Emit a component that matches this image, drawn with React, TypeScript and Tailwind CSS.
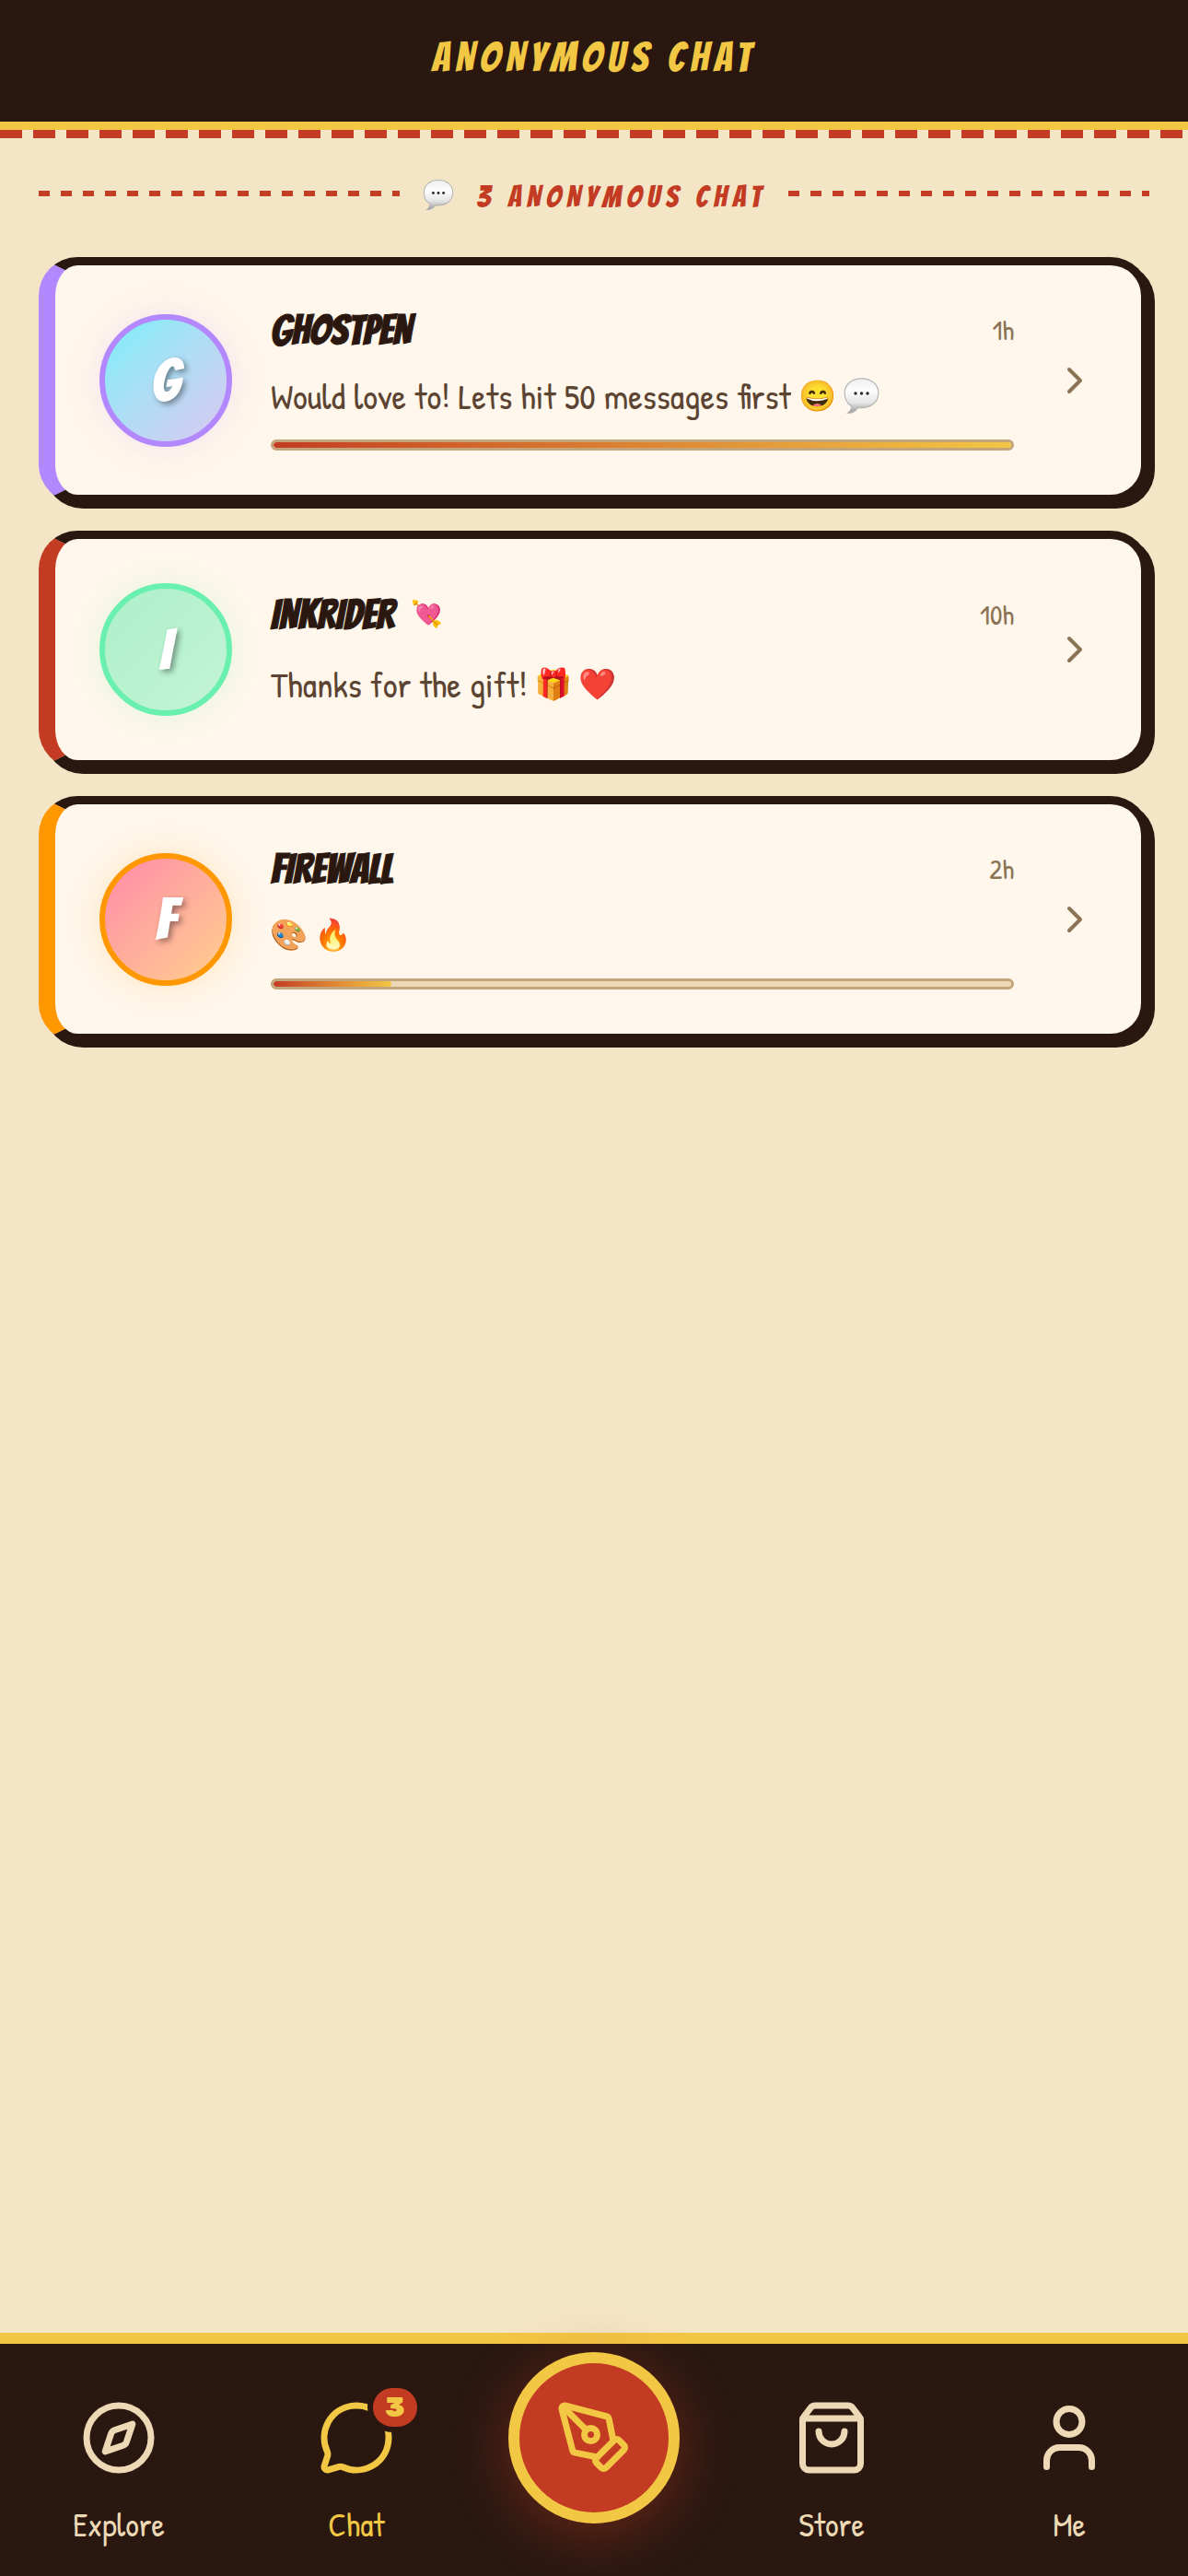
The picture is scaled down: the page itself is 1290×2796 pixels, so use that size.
import React from "react";
import { ChevronRight, Compass, MessageCircle, PenTool, ShoppingBag, User } from "lucide-react";

type Chat = {
  name: string;
  badge?: string;
  time: string;
  text?: string;
  emojis: string[];
  border: string;
  avatar: string;
  progress?: number;
};

const chats: Chat[] = [
  {
    name: "GHOSTPEN",
    time: "1h",
    text: "Would love to! Lets hit 50 messages first",
    emojis: ["😄", "💬"],
    border: "border-l-[#b388ff]",
    avatar: "border-[#b388ff] from-[#76eff8] to-[#d8c8f0] shadow-[0_0_36px_rgba(179,136,255,0.18)]",
    progress: 100,
  },
  {
    name: "INKRIDER",
    badge: "💘",
    time: "10h",
    text: "Thanks for the gift!",
    emojis: ["🎁", "❤️"],
    border: "border-l-[#c23b22]",
    avatar: "border-[#69f0ae] from-[#adf0c8] to-[#c3f4d6] shadow-[0_0_36px_rgba(105,240,174,0.18)]",
  },
  {
    name: "FIREWALL",
    time: "2h",
    emojis: ["🎨", "🔥"],
    border: "border-l-[#ff9800]",
    avatar: "border-[#ff9800] from-[#ff8aa8] to-[#ffcf8c] shadow-[0_0_36px_rgba(255,152,0,0.18)]",
    progress: 16,
  },
];

const display = "font-['Bangers','Roboto_Condensed',sans-serif]";

function SpeechBubble({ className }: { className: string }) {
  return (
    <svg viewBox="0 0 39 42" className={className} role="img" aria-label="💬">
      <defs>
        <linearGradient id="bubble-fill" x1="0" y1="0" x2="0" y2="1">
          <stop offset="0" stopColor="#eeeeee" />
          <stop offset="0.35" stopColor="#fdfdfd" />
          <stop offset="0.7" stopColor="#e6e6e6" />
          <stop offset="1" stopColor="#999999" />
        </linearGradient>
      </defs>
      <path
        d="M19.500 1.800C9.500 1.800 1.200 7.800 1.200 17.500C1.200 24.500 4.200 29.200 8.600 31.600C8.900 34.600 7.200 37.200 4.600 39.200C9.200 39.600 13.400 37.200 15.600 33.500C28.500 34.800 37.800 28.300 37.800 17.500C37.800 7.800 29.500 1.800 19.500 1.800Z"
        fill="url(#bubble-fill)"
        stroke="#b5b5b5"
        strokeWidth="1.200"
      />
      <circle cx="13" cy="18" r="1.700" fill="#2b2b2b" />
      <circle cx="19.500" cy="18" r="1.700" fill="#2b2b2b" />
      <circle cx="26" cy="18" r="1.700" fill="#2b2b2b" />
    </svg>
  );
}

function Emoji({ char }: { char: string }) {
  return (
    <span className="flex w-[39px] shrink-0 items-center justify-center font-['Noto_Color_Emoji',sans-serif] text-[33px]">
      {char === "💬" ? <SpeechBubble className="h-[42px] w-[39px]" /> : char}
    </span>
  );
}

function Dashes() {
  return (
    <span className="h-[6px] flex-1 bg-[repeating-linear-gradient(90deg,#c23b22_0_12px,transparent_12px_24px)]" />
  );
}

function ChatCard({ chat }: { chat: Chat }) {
  return (
    <button
      type="button"
      className={`flex w-full items-center gap-[42px] rounded-[42px] border-[9px] border-l-[18px] border-[#2a1810] bg-[#fff7eb] p-12 text-left shadow-[6px_6px_0_#2a1810] ${chat.border}`}
    >
      <span
        className={`flex size-36 shrink-0 items-center justify-center rounded-full border-[6px] bg-linear-135 text-[60px] leading-none font-bold text-white [text-shadow:3px_3px_6px_rgba(0,0,0,0.4)] ${display} ${chat.avatar}`}
      >
        {chat.name[0]}
      </span>
      <span className="flex min-w-0 flex-1 flex-col">
        <span className="flex items-center">
          <span className={`text-[45px] leading-[45px] text-[#2a1810] [-webkit-text-stroke:1px_#2a1810] ${display}`}>
            {chat.name}
          </span>
          {chat.badge && (
            <span className="ml-[18px] font-['Noto_Color_Emoji',sans-serif] text-[28px] leading-[54px]">
              {chat.badge}
            </span>
          )}
          <span className="ml-auto text-[30px] leading-[45px] text-[#8b7355]">{chat.time}</span>
        </span>
        <span className="mt-[22px] flex items-center gap-[9px] text-[39px] leading-[54px] text-[#5c4433]">
          {chat.text && <span className="truncate">{chat.text}</span>}
          {chat.emojis.map((char) => (
            <Emoji key={char} char={char} />
          ))}
        </span>
        {chat.progress !== undefined && (
          <span
            role="progressbar"
            aria-label={`${chat.name} progress`}
            aria-valuenow={chat.progress}
            className="mt-5 h-3 overflow-hidden rounded-full border-[3px] border-[#c4a57b] bg-[#edd9b5]"
          >
            <span
              className="block h-full rounded-full bg-linear-to-r from-[#c23b22] to-[#f2c744]"
              style={{ width: `${chat.progress}%` }}
            />
          </span>
        )}
      </span>
      <ChevronRight className="size-12 shrink-0 text-[#8b7355]" strokeWidth={2} />
    </button>
  );
}

function NavItem({
  icon: Icon,
  label,
  active,
  count,
}: {
  icon: React.ElementType;
  label: string;
  active?: boolean;
  count?: number;
}) {
  return (
    <a
      href="#"
      className={`flex flex-1 flex-col items-center gap-[25px] ${active ? "text-[#f2c744]" : "text-[#edd9b5]"}`}
    >
      <span className="relative">
        <Icon className="size-[84px]" strokeWidth={2} />
        {count !== undefined && (
          <span className="absolute -top-[18px] -right-[30px] flex h-[54px] w-[60px] items-center justify-center rounded-full border-[6px] border-[#2a1810] bg-[#c23b22] font-['Rubik',Inter,sans-serif] text-[30px] leading-none font-black">
            {count}
          </span>
        )}
      </span>
      <span className="text-[36px] leading-[54px]">{label}</span>
    </a>
  );
}

export default function App() {
  return (
    <div className="flex min-h-screen flex-col bg-[#f4e5c6] font-['Patrick_Hand','Roboto_Condensed',sans-serif]">
      <header className="flex h-[141px] items-center justify-center border-b-[9px] border-[#f2c744] bg-[#2a1810] pb-[9px]">
        <h1 className={`text-[45px] leading-[54px] tracking-[6px] text-[#f2c744] ${display}`}>ANONYMOUS CHAT</h1>
      </header>
      <div className="h-[9px] bg-[repeating-linear-gradient(90deg,#c23b22_0_24px,transparent_24px_36px)]" />
      <main className="flex flex-1 flex-col px-[42px] pt-[33px]">
        <div className="flex items-center gap-6">
          <Dashes />
          <h2 className={`flex items-center gap-6 text-[33px] leading-[54px] text-[#c23b22] ${display}`}>
            <SpeechBubble className="mt-1 h-9 w-9" />
            <span className="mt-1 -mb-1 tracking-[6px]">3 ANONYMOUS CHAT</span>
          </h2>
          <Dashes />
        </div>
        <div className="mt-[42px] flex flex-col gap-[30px]">
          {chats.map((chat) => (
            <ChatCard key={chat.name} chat={chat} />
          ))}
        </div>
      </main>
      <nav className="flex border-t-[12px] border-[#f2c744] bg-[#2a1810] pt-[60px] pb-[29px]">
        <NavItem icon={Compass} label="Explore" />
        <NavItem icon={MessageCircle} label="Chat" active count={3} />
        <div className="flex h-[84px] flex-1 items-center justify-center">
          <button
            type="button"
            aria-label="Write"
            className="flex size-[186px] shrink-0 items-center justify-center rounded-full border-[12px] border-[#f2c744] bg-[#c23b22] text-[#f2c744] shadow-[0_12px_60px_rgba(194,59,34,0.4)]"
          >
            <PenTool className="size-[84px]" strokeWidth={2} />
          </button>
        </div>
        <NavItem icon={ShoppingBag} label="Store" />
        <NavItem icon={User} label="Me" />
      </nav>
    </div>
  );
}
